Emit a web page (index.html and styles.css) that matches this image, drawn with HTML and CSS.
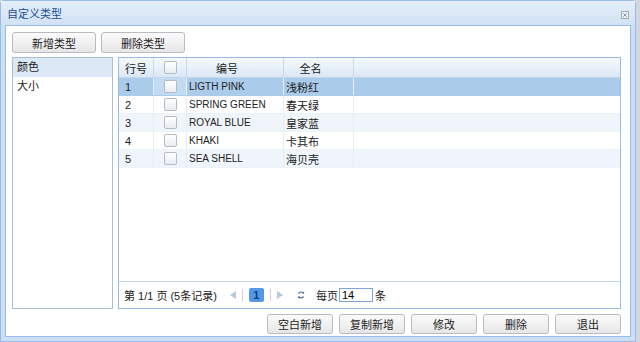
FILE: index.html
```html
<!DOCTYPE html>
<html lang="zh-CN">
<head>
  <meta charset="UTF-8" />
  <title>自定义类型</title>
  <link rel="stylesheet" href="styles.css">
</head>
<body>
  <div class="window">
    <div class="titlebar">
      <span class="title">自定义类型</span>
      <svg class="close" viewBox="0 0 8 8">
        <rect x="0.5" y="0.5" width="7" height="7" />
        <path d="M2 2l4 4M6 2l-4 4" />
      </svg>
    </div>

    <div class="panel">
      <!-- type buttons -->
      <div class="toolbar">
        <button class="btn btn-type">新增类型</button>
        <button class="btn btn-type">删除类型</button>
      </div>

      <div class="main">
        <ul class="type-list">
          <li class="selected">颜色</li>
          <li>大小</li>
        </ul>

        <div class="grid">
          <div class="grid-row grid-head">
            <div class="cell">行号</div>
            <div class="cell cell-check"><span class="check"></span></div>
            <div class="cell cell-title">编号</div>
            <div class="cell cell-title">全名</div>
            <div class="cell"></div>
          </div>
          <div class="grid-row selected">
            <div class="cell">1</div>
            <div class="cell cell-check"><span class="check"></span></div>
            <div class="cell code">LIGTH PINK</div>
            <div class="cell">浅粉红</div>
            <div class="cell"></div>
          </div>
          <div class="grid-row">
            <div class="cell">2</div>
            <div class="cell cell-check"><span class="check"></span></div>
            <div class="cell code">SPRING GREEN</div>
            <div class="cell">春天绿</div>
            <div class="cell"></div>
          </div>
          <div class="grid-row alt">
            <div class="cell">3</div>
            <div class="cell cell-check"><span class="check"></span></div>
            <div class="cell code">ROYAL BLUE</div>
            <div class="cell">皇家蓝</div>
            <div class="cell"></div>
          </div>
          <div class="grid-row">
            <div class="cell">4</div>
            <div class="cell cell-check"><span class="check"></span></div>
            <div class="cell code">KHAKI</div>
            <div class="cell">卡其布</div>
            <div class="cell"></div>
          </div>
          <div class="grid-row alt">
            <div class="cell">5</div>
            <div class="cell cell-check"><span class="check"></span></div>
            <div class="cell code">SEA SHELL</div>
            <div class="cell">海贝壳</div>
            <div class="cell"></div>
          </div>
          <div class="grid-fill"></div>

          <!-- paging bar -->
          <div class="pager">
            <span class="pager-info">第 1/1 页 (5条记录)</span>
            <svg class="arrow arrow-prev" viewBox="0 0 6 8"><path d="M6 0v8L0 4z" /></svg>
            <span class="sep"></span>
            <span class="page-num">1</span>
            <span class="sep"></span>
            <svg class="arrow arrow-next" viewBox="0 0 6 8"><path d="M0 0v8l6-4z" /></svg>
            <svg class="refresh" viewBox="0 0 8 8">
              <path d="M1.5 2.5A3 3 0 0 1 6.5 2.5M6.5 5.5A3 3 0 0 1 1.5 5.5" />
              <path class="tip" d="M5.2 1.2L7 2.8 7.2 0.6zM2.8 6.8L1 5.2 0.8 7.4z" />
            </svg>
            <span class="per-page">每页</span>
            <input class="page-size" type="text" value="14">
            <span>条</span>
          </div>
        </div>
      </div>

      <div class="actions">
        <button class="btn">空白新增</button>
        <button class="btn">复制新增</button>
        <button class="btn">修改</button>
        <button class="btn">删除</button>
        <button class="btn">退出</button>
      </div>
    </div>
  </div>
</body>
</html>
```

FILE: styles.css
```css
body {
  margin: 0;
  width: 640px;
  height: 342px;
  overflow: hidden;
  background: #d3d7dd;
  font-family: 'Liberation Sans', 'Noto Sans CJK SC', sans-serif;
  font-size: 11px;
  color: #222;
}

.window {
  box-sizing: border-box;
  width: 636px;
  height: 342px;
  display: flex;
  flex-direction: column;
  border: 1px solid #99bbe8;
  border-radius: 4px 4px 0 0;
  background: #cddff3;
  padding: 0 4px 4px 4px;
}

.titlebar {
  height: 24px;
  display: flex;
  align-items: center;
  justify-content: space-between;
  background: linear-gradient(#e4eefa, #d2e2f5);
  margin: 0 -4px;
  padding: 0 6px;
}

.title {
  color: #1b4f9a;
  font-size: 11px;
}

.close {
  width: 8px;
  height: 8px;
  margin-top: 4px;
}

.close rect {
  fill: #f4f6f8;
  stroke: #a0a8b2;
  stroke-width: 1;
}

.close path {
  stroke: #8c96a2;
  stroke-width: 1;
}

.panel {
  flex: 1;
  display: flex;
  flex-direction: column;
  background: #ffffff;
  border: 1px solid #99bbe8;
  padding: 6px 9px 2px 6px;
  min-height: 0;
}

.btn {
  font-family: inherit;
  font-size: 11px;
  color: #222;
  width: 66px;
  height: 20px;
  padding: 0;
  border: 1px solid #b8bcc2;
  border-radius: 3px;
  background: linear-gradient(#fbfbfb, #e6e6e6);
  cursor: pointer;
}

.toolbar {
  display: flex;
  gap: 5px;
}

.btn-type {
  width: 84px;
  height: 21px;
}

.main {
  flex: 1;
  display: flex;
  gap: 5px;
  margin-top: 4px;
  min-height: 0;
}

.type-list {
  width: 101px;
  box-sizing: border-box;
  margin: 0;
  padding: 0;
  list-style: none;
  border: 1px solid #a9bfd8;
}

.type-list li {
  height: 19px;
  line-height: 19px;
  padding-left: 4px;
}

.type-list li.selected {
  background: #dbe8f6;
}

.grid {
  flex: 1;
  display: flex;
  flex-direction: column;
  border: 1px solid #99bbe8;
}

.grid-row {
  display: grid;
  grid-template-columns: 35px 33px 97px 70px 1fr;
  height: 18px;
  border-bottom: 1px solid #edf2f8;
  box-sizing: border-box;
}

.grid-row.alt {
  background: #f0f5fb;
}

.grid-row.selected {
  background: #abcbea;
  border-bottom-color: #abcbea;
}

.grid-head {
  height: 20px;
  background: linear-gradient(#f5f9fd, #dae7f6);
  border-bottom: 1px solid #c4d6ec;
}

.cell {
  display: flex;
  align-items: center;
  padding-left: 6px;
  border-right: 1px solid #e6edf5;
  white-space: nowrap;
  overflow: hidden;
}

.grid-head .cell {
  border-right-color: #c8d8ea;
}

.grid-row .cell:last-child {
  border-right: none;
}

.cell.code,
.cell:nth-child(4) {
  padding-left: 2px;
}

.cell.code {
  font-size: 10px;
}

.grid-head .cell-title {
  justify-content: center;
  padding: 0 16px 0 0;
}

.cell-check {
  justify-content: center;
  padding: 0;
}

.grid-row.selected .cell-check {
  background: #c3dbf2;
}

.check {
  width: 11px;
  height: 11px;
  border: 1px solid #b3bcc6;
  border-radius: 2px;
  background: linear-gradient(#ffffff, #e9edf1);
}

.grid-fill {
  flex: 1;
}

.pager {
  height: 26px;
  border-top: 1px solid #c4d6ec;
  display: flex;
  align-items: center;
  padding-left: 5px;
}

.pager-info {
  margin-right: 13px;
}

.arrow {
  width: 6px;
  height: 8px;
  fill: #b4c8e2;
}

.sep {
  width: 1px;
  height: 12px;
  background: #c9d2dc;
  margin: 0 6px;
}

.page-num {
  width: 15px;
  height: 14px;
  border-radius: 2px;
  background: #5596e6;
  color: #0e3e86;
  font-weight: bold;
  text-align: center;
  line-height: 14px;
}

.refresh {
  width: 8px;
  height: 8px;
  margin: 0 11px 0 14px;
}

.refresh path {
  fill: none;
  stroke: #5a78a8;
  stroke-width: 1.4;
}

.refresh .tip {
  fill: #5a78a8;
  stroke: none;
}

.page-size {
  width: 34px;
  height: 14px;
  box-sizing: border-box;
  margin: 0 2px 0 1px;
  padding: 0 2px;
  border: 1px solid #7ea6d8;
  font-family: inherit;
  font-size: 11px;
}

.actions {
  display: flex;
  justify-content: flex-end;
  gap: 6px;
  margin-top: 5px;
}
```
